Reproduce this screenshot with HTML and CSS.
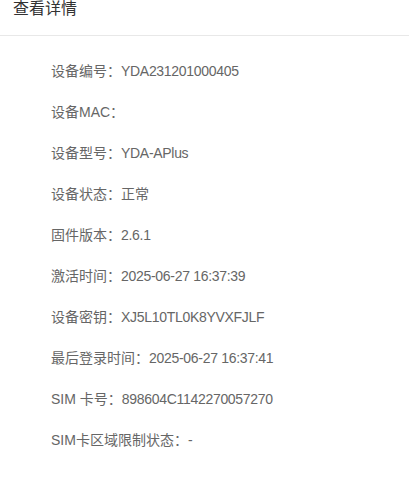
FILE: index.html
```html
<!DOCTYPE html>
<html lang="zh">
<head>
<meta charset="utf-8">
<link rel="stylesheet" href="styles.css">
</head>
<body>
<div class="header"><span class="title">查看详情</span></div>
<ul class="info">
  <li>设备编号：<span class="val">YDA231201000405</span></li>
  <li>设备MAC：</li>
  <li>设备型号：<span class="val">YDA-APlus</span></li>
  <li>设备状态：正常</li>
  <li>固件版本：<span class="val">2.6.1</span></li>
  <li>激活时间：<span class="val">2025-06-27 16:37:39</span></li>
  <li>设备密钥：<span class="val">XJ5L10TL0K8YVXFJLF</span></li>
  <li>最后登录时间：<span class="val">2025-06-27 16:37:41</span></li>
  <li>SIM 卡号：<span class="val">898604C1142270057270</span></li>
  <li>SIM卡区域限制状态：-</li>
</ul>
</body>
</html>
```
FILE: styles.css
```css
html, body {
  margin: 0;
  padding: 0;
  background: #fff;
}
body {
  font-family: "Liberation Sans", "Noto Sans CJK SC", sans-serif;
}
.header {
  height: 35px;
  border-bottom: 1px solid #e8e8e8;
  padding: 0 13px;
  box-sizing: content-box;
}
.title {
  display: block;
  font-size: 16px;
  line-height: 18px;
  color: #333;
}
.info {
  list-style: none;
  margin: 0;
  padding: 15px 0 0 51px;
}
.info li {
  height: 41px;
  line-height: 41px;
  font-size: 14px;
  color: #666;
  white-space: nowrap;
}
.val {
  letter-spacing: -0.3px;
}
```
